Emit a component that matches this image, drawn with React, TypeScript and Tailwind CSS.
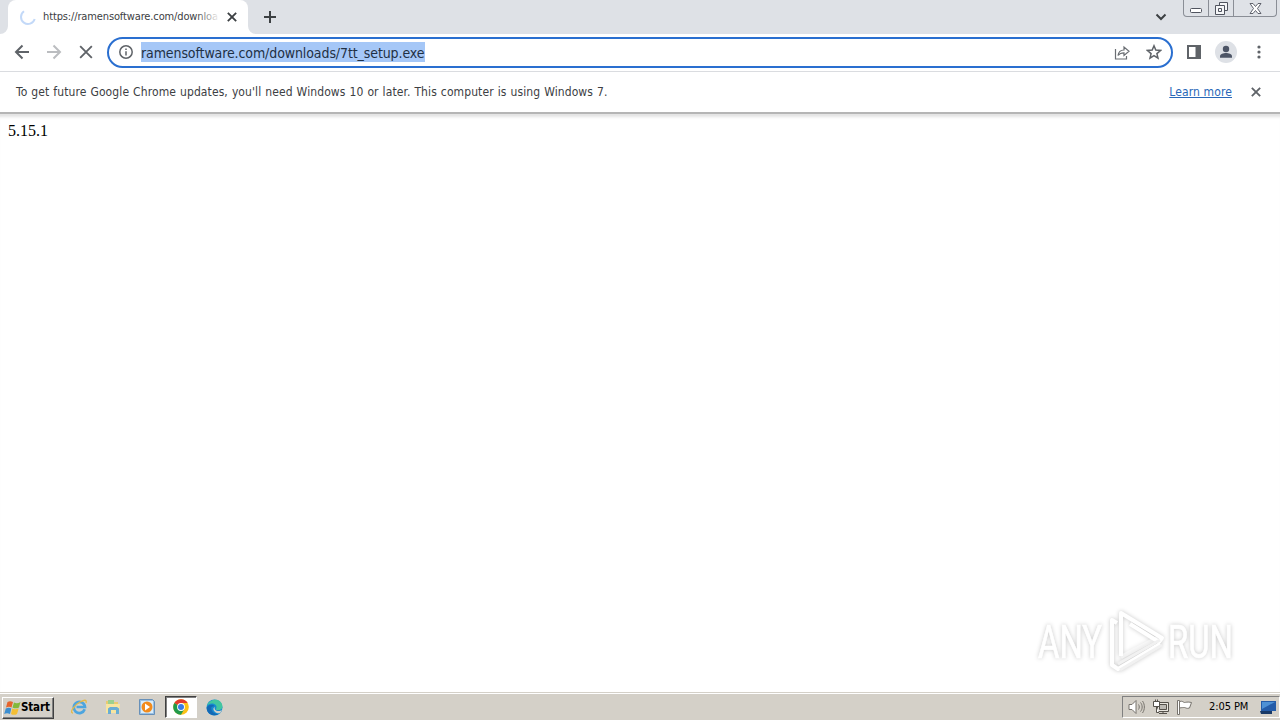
import React from 'react';

const CloseIcon = ({ size, color, width = 2 }: { size: number; color: string; width?: number }) => (
  <svg width={size} height={size} viewBox="0 0 12 12" stroke={color} strokeWidth={width} fill="none">
    <path d="M1 1l10 10M11 1L1 11" />
  </svg>
);

const TabStrip = () => (
  <div className="flex h-[34px] shrink-0 bg-[#dee1e6]">
    <div className="flex w-2 items-end">
      <svg width="8" height="8" viewBox="0 0 8 8">
        <path d="M8 0v8H0a8 8 0 0 0 8-8z" fill="#fff" />
      </svg>
    </div>
    <div className="flex w-60 items-center rounded-t-lg bg-white pl-3">
      <svg width="16" height="16" viewBox="0 0 16 16" fill="none" stroke="#c3d9f8" strokeWidth="2">
        <path d="M4 2.2A7 7 0 1 0 14.7 10" />
      </svg>
      <div className="relative ml-[7px] w-[177px] overflow-hidden whitespace-nowrap text-[11px] leading-4 tracking-[-0.13px] text-[#3c4043]">
        https://ramensoftware.com/downloa
        <div className="absolute inset-y-0 right-0 w-6 bg-gradient-to-r from-transparent to-white" />
      </div>
      <div className="ml-[7px]">
        <CloseIcon size={10} color="#3c4043" width={2.2} />
      </div>
    </div>
    <div className="flex w-2 items-end">
      <svg width="8" height="8" viewBox="0 0 8 8">
        <path d="M0 0v8h8a8 8 0 0 1-8-8z" fill="#fff" />
      </svg>
    </div>
    <div className="flex items-center pl-2">
      <svg width="12" height="12" viewBox="0 0 12 12" stroke="#3c4043" strokeWidth="2">
        <path d="M6 0v12M0 6h12" />
      </svg>
    </div>
    <div className="ml-auto flex items-center pr-4">
      <svg width="12" height="8" viewBox="0 0 12 8" fill="none" stroke="#3c4043" strokeWidth="2">
        <path d="M1.5 1.5L6 6l4.5-4.5" />
      </svg>
    </div>
    <div className="mr-[3px] flex h-[17px] w-[94px] rounded-b-[4px] border border-t-0 border-[#8a8e96] bg-[#dfe2e7]">
      <div className="flex w-[25px] justify-center border-r border-[#8a8e96] pt-2">
        <svg width="12" height="5" viewBox="0 0 12 5">
          <rect x=".5" y=".5" width="11" height="4" rx="1" fill="#fff" stroke="#50545f" />
        </svg>
      </div>
      <div className="flex w-[25px] justify-center border-r border-[#8a8e96] pt-0.5">
        <svg width="13" height="13" viewBox="0 0 13 13" fill="#f5f6f8" stroke="#50545f">
          <path d="M4.5.5h8v8h-8z" />
          <path d="M.5 3.5h9v9h-9z" />
          <path d="M3.5 6.5h3v3h-3z" />
        </svg>
      </div>
      <div className="flex flex-1 justify-center pt-[3px]">
        <svg width="13" height="11" viewBox="0 0 13 11" fill="#fff" stroke="#50545f" strokeWidth=".9">
          <path d="M1 .5h3l2.5 3L9 .5h3L8.500 5.500l3.500 5H9l-2.500-3-2.500 3H1l3.500-5z" />
        </svg>
      </div>
    </div>
  </div>
);

const Toolbar = () => (
  <div className="flex h-[38px] shrink-0 items-center border-b border-[#dadce0] bg-white pb-px">
    <svg className="ml-[14px]" width="16" height="16" viewBox="0 0 16 16" fill="none" stroke="#5f6368" strokeWidth="2">
      <path d="M15 8H2.5M8.5 1.5L2 8l6.5 6.5" />
    </svg>
    <svg className="ml-4" width="16" height="16" viewBox="0 0 16 16" fill="none" stroke="#bbbdc0" strokeWidth="2">
      <path d="M1 8h12.5M7.5 1.5L14 8l-6.5 6.5" />
    </svg>
    <div className="ml-[17px]">
      <CloseIcon size={14} color="#5f6368" width={1.6} />
    </div>
    <div className="ml-[14px] flex h-[31px] w-[1066px] items-center rounded-full border-2 border-[#2a6fd0] pr-[9px] pl-[10px]">
      <svg width="14" height="14" viewBox="0 0 14 14" fill="none" stroke="#5f6368" strokeWidth="1.5">
        <circle cx="7" cy="7" r="6.2" />
        <path d="M7 6.2v4.3M7 3.500v1.500" />
      </svg>
      <span className="ml-2 h-5 w-[284px] whitespace-nowrap bg-[#a5c7f7] text-[14px] leading-[22px] tracking-[-0.1px] text-[#1f3044]">
        ramensoftware.com/downloads/7tt_setup.exe
      </span>
      <svg className="ml-auto" width="16" height="15" viewBox="0 0 16 15" fill="none" stroke="#6a6e73" strokeWidth="1.2">
        <path d="M1.5 4v10h11v-3" />
        <path d="M4 10.5c.5-3.5 2.5-5.5 6-5.5V2l5 4.3-5 4.2V7.800C7.500 7.800 5.500 8.500 4 10.500z" />
      </svg>
      <svg className="ml-4" width="16" height="16" viewBox="0 0 16 16" fill="none" stroke="#5f6368" strokeWidth="1.5">
        <path d="M8 1.800l1.800 4.300 4.700.4-3.600 3.100 1.100 4.600L8 11.700l-4 2.500 1.100-4.600-3.600-3.100 4.700-.4z" />
      </svg>
    </div>
    <svg className="ml-[14px]" width="14" height="14" viewBox="0 0 14 14">
      <path d="M1 1h12v12H1z" fill="none" stroke="#5f6368" strokeWidth="2" />
      <path d="M8.5 1H13v12H8.5z" fill="#5f6368" />
    </svg>
    <svg className="ml-[14px]" width="22" height="22" viewBox="0 0 22 22">
      <circle cx="11" cy="11" r="11" fill="#dee1e6" />
      <circle cx="11" cy="8" r="3.2" fill="#4d5566" />
      <path d="M5 16.700v-1.500c0-2.200 3.500-3.200 6-3.200s6 1 6 3.200v1.500z" fill="#4d5566" />
    </svg>
    <svg className="ml-5" width="4" height="14" viewBox="0 0 4 14" fill="#5f6368">
      <circle cx="2" cy="2" r="1.6" />
      <circle cx="2" cy="7" r="1.6" />
      <circle cx="2" cy="12" r="1.6" />
    </svg>
  </div>
);

const InfoBar = () => (
  <div className="flex h-[42px] shrink-0 items-center border-b-2 border-[#b5b5b5] bg-white pr-[19px] pl-4 text-[12px]">
    <span className="whitespace-nowrap tracking-[0.1px] [word-spacing:0.45px] text-[#3c4043]">
      To get future Google Chrome updates, you'll need Windows 10 or later. This computer is using Windows 7.
    </span>
    <a className="ml-auto whitespace-nowrap tracking-[0.12px] text-[#2867b8] underline">Learn more</a>
    <div className="ml-[19px]">
      <CloseIcon size={10} color="#5f6368" width={2.2} />
    </div>
  </div>
);

const Watermark = () => (
  <svg
    className="absolute right-[36px] bottom-[16px] overflow-visible drop-shadow-[0_0_2px_rgba(0,0,0,0.22)]"
    width="210"
    height="70"
    viewBox="0 0 210 70"
  >
    <g fontFamily="Roboto, sans-serif" fontSize="47" fill="#fff" stroke="#fff" strokeWidth=".7">
      <text x="4" y="52" textLength="64" lengthAdjust="spacingAndGlyphs">ANY</text>
      <text x="134" y="52" textLength="65" lengthAdjust="spacingAndGlyphs">RUN</text>
    </g>
    <g fill="none" stroke="#fff" strokeWidth="4" strokeLinejoin="round">
      <path d="M84 15l-6-1v44l7 4M88 7v45l40-24z" strokeOpacity="0" />
      <path d="M83 17l-5-3v45l6 4 42-25" />
      <path d="M87 50V7l41 25-3 4-29-18" />
      <path d="M87 51l38-20" strokeOpacity=".5" />
      <path d="M84 58l42-24M86 64l42-25" stroke="#f1f1f1" strokeWidth="3" />
    </g>
  </svg>
);

const WindowsFlag = () => (
  <svg width="17" height="16" viewBox="0 0 17 16">
    <path d="M3.500 2c2-1.300 3.500-1 5.500 0L7.500 7.500C6 6.500 4 6.500 2 7.500z" fill="#e6642d" />
    <path d="M10 2.500c2 1 4 1 6.500-.5L15 7.500c-2.500 1.300-4.500 1-6.500 0z" fill="#83b93b" />
    <path d="M1.800 8.500c2-1 4-1 5.500 0L6 14c-2-1-4-1-5.800 0z" fill="#3c8ed0" />
    <path d="M8.200 8.500c2 1 4 1 6.500 0L13 14c-2 1.300-4.500 1-6 0z" fill="#f4bf35" />
  </svg>
);

const ExplorerIcon = () => (
  <svg width="17" height="16" viewBox="0 0 17 16" fill="none">
    <path d="M13.700 10.300A5.600 5.600 0 1 1 14 8H5.500" stroke="#4da5df" strokeWidth="2.700" />
    <path d="M2 14C-2 14 3 6 9 3c4-2 7-3 6 1" stroke="#e5b947" strokeWidth="1.300" />
  </svg>
);

const FolderIcon = () => (
  <svg width="16" height="16" viewBox="0 0 16 16">
    <path d="M1 2h5l1 1h6v10H1z" fill="#e9ca70" />
    <path d="M3 1h6v4H3z" fill="#9bd08f" />
    <path d="M1 5h14l-1 9H1z" fill="#f7e5a0" />
    <path d="M3 15V9.500l2-1.500h7l2 1.500V15h-3v-4H6v4z" fill="#69add4" />
  </svg>
);

const MediaIcon = () => (
  <svg width="16" height="16" viewBox="0 0 16 16">
    <path d="M.5.500h13l2 2v13H.500z" fill="#9ac1e4" stroke="#6790b9" />
    <rect x="2" y="2" width="12" height="12" fill="#d9edfb" />
    <circle cx="8" cy="8" r="5.500" fill="#f28b1c" />
    <path d="M6 4.500l5 3.500-5 3.500z" fill="#fff" />
  </svg>
);

const ChromeIcon = () => (
  <svg width="16" height="16" viewBox="0 0 16 16">
    <circle cx="8" cy="8" r="7.800" fill="#fbc116" />
    <path d="M8 8L1.250 4.100A7.800 7.800 0 0 1 14.750 4.100H8z" fill="#e33b2e" />
    <path d="M1.250 4.100A7.800 7.800 0 0 0 8 15.800l3.400-5.800L8 8z" fill="#229a4b" />
    <circle cx="8" cy="8" r="3.900" fill="#fff" />
    <circle cx="8" cy="8" r="3" fill="#397be6" />
  </svg>
);

const EdgeIcon = () => (
  <svg width="17" height="17" viewBox="0 0 17 17">
    <circle cx="8.500" cy="8.500" r="8" fill="#168bd2" />
    <path d="M.7 7C3 1 8 .5 10 .7c5 .5 7 5 6.300 7.800-.8 3-5 3-6.500 2C12 7 9 4.500 6 4.500 3 4.500 1.500 6 .7 7z" fill="#42c6a0" />
    <path d="M5.500 8c-1 3 1.500 7 7 7.200C8 18 1 15.500.600 9 2 5 7 5 8.500 7z" fill="#1469b5" />
    <path d="M9 7.800c-1.500 3 1.500 5 5.500 4l1.500-.8-2 3.200c-4 .3-7-2-6.500-5z" fill="#d4d0c8" />
  </svg>
);

const TrayIcons = () => (
  <>
    <svg width="17" height="16" viewBox="0 0 17 16" fill="none" stroke="#77736d">
      <path d="M1 5.500h3L8 1.500v13l-4-4H1z" fill="#fff" />
      <path d="M10.500 5.500c1 1.500 1 3.500 0 5M12.500 3.500c2.200 2.500 2.200 6.500 0 9M14.500 2c2.500 3.500 2.500 8.500 0 12" />
    </svg>
    <svg className="ml-2" width="16" height="16" viewBox="0 0 16 16" stroke="#55514b">
      <path d="M4.500 3.500h11v9h-11zM6 14.500h8M10 12.500v2" fill="#e9e6df" />
      <path d="M6.500 5.500h7v5h-7z" fill="#bcb9b3" />
      <path d="M.5 2.500h6v5h-6zM2.500.5v2M4.500.5v2M3.500 7.500v6H6" fill="#fff" />
    </svg>
    <svg className="ml-[7px]" width="17" height="16" viewBox="0 0 17 16" fill="#fff" stroke="#77736d">
      <path d="M1.500 1.500h2v14h-2z" />
      <path d="M3.500 2.500c3-1 4 1 5 1s3-1 7 0l-2 5.500c-3 1-4-.5-5-.5s-2.500 0-5 .5z" />
    </svg>
  </>
);

const Taskbar = () => (
  <div className="flex h-7 shrink-0 items-center border-t border-[#d4d0c8] bg-[#d4d0c8] shadow-[inset_0_1px_0_#fff]">
    <div className="mt-0.5 ml-0.5 flex h-[22px] w-[52px] items-center border border-t-white border-r-[#404040] border-b-[#404040] border-l-white pl-px shadow-[inset_-1px_-1px_0_#808080]">
      <WindowsFlag />
      <span className="text-[11.5px] font-bold tracking-[-0.15px] text-black">Start</span>
    </div>
    <div className="mt-px ml-[17px] flex items-center">
      <ExplorerIcon />
      <div className="ml-[17px]"><FolderIcon /></div>
      <div className="ml-[18px]"><MediaIcon /></div>
      <div className="ml-[10px] flex h-[22px] w-8 items-center justify-center border border-t-[#404040] border-r-white border-b-white border-l-[#404040] bg-white shadow-[inset_1px_1px_0_#808080]">
        <ChromeIcon />
      </div>
      <div className="ml-[9px]"><EdgeIcon /></div>
    </div>
    <div className="mt-px ml-auto flex h-[22px] w-[158px] items-center border border-t-[#808080] border-r-white border-b-white border-l-[#808080] pl-[5px]">
      <TrayIcons />
      <span className="ml-4 whitespace-nowrap text-[11px] tracking-[-0.08px] text-black">2:05 PM</span>
      <svg className="mr-[3px] ml-auto" width="16" height="13" viewBox="0 0 16 13">
        <path d="M1 0h15v10H1z" fill="#245ca9" />
        <path d="M2 1h13L2 8z" fill="#4e91d5" />
        <path d="M0 10h12v3H1z" fill="#183967" />
      </svg>
    </div>
  </div>
);

export default function App() {
  return (
    <div className="flex h-[720px] w-[1280px] flex-col overflow-hidden bg-white font-['DejaVu_Sans_Condensed','DejaVu_Sans',sans-serif]">
      <TabStrip />
      <Toolbar />
      <InfoBar />
      <main className="relative flex-1 bg-white px-2 pt-2 font-['Liberation_Serif',serif] text-[16px] leading-[18px] text-black shadow-[inset_0_5px_3px_-2px_#e3e3e3]">
        5.15.1
        <Watermark />
      </main>
      <Taskbar />
    </div>
  );
}
